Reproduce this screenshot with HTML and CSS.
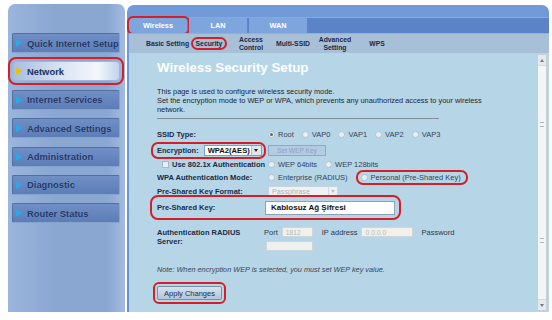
FILE: index.html
```html
<!DOCTYPE html>
<html lang="en">
<head>
    <meta charset="UTF-8">
    <meta name="viewport" content="width=device-width, initial-scale=1.0">
    <title>Wireless Security Setup</title>
    <link rel="stylesheet" href="styles.css">
</head>
<body>
    <div class="frame">
        <div class="sidebar">
            <a class="menu">Quick Internet Setup</a>
            <a class="menu active mark">Network</a>
            <a class="menu">Internet Services</a>
            <a class="menu">Advanced Settings</a>
            <a class="menu">Administration</a>
            <a class="menu">Diagnostic</a>
            <a class="menu">Router Status</a>
        </div>

        <div class="main">
            <div class="tabs">
                <span class="tab mark">Wireless</span>
                <span class="tab">LAN</span>
                <span class="tab">WAN</span>
            </div>

            <div class="subtabs">
                <span class="sub">Basic Setting</span>
                <span class="sub"><span class="mark sec">Security</span></span>
                <span class="sub">Access<br>Control</span>
                <span class="sub">Multi-SSID</span>
                <span class="sub">Advanced<br>Setting</span>
                <span class="sub">WPS</span>
            </div>

            <div class="content">
                <div class="page">
                    <h1>Wireless Security Setup</h1>
                    <p class="intro">This page is used to configure wireless security mode.<br>Set the encryption mode to WEP or WPA, which prevents any unauthorized access to your wireless<br>network.</p>
                    <hr>

                    <div class="row r-ssid">
                        <div class="label">SSID Type:</div>
                        <div class="ctrl">
                            <span class="opt"><i class="radio on"></i>Root</span>
                            <span class="opt"><i class="radio"></i>VAP0</span>
                            <span class="opt"><i class="radio"></i>VAP1</span>
                            <span class="opt"><i class="radio"></i>VAP2</span>
                            <span class="opt"><i class="radio"></i>VAP3</span>
                        </div>
                    </div>

                    <div class="row r-enc">
                        <div class="label">
                            <span class="mark enc">Encryption:
                                <span class="select"><b>WPA2(AES)</b><span class="arrow"></span></span>
                            </span>
                        </div>
                        <div class="ctrl">
                            <span class="btn-off">Set WEP Key</span>
                        </div>
                    </div>

                    <div class="row r-small">
                        <div class="label indent"><i class="check"></i>Use 802.1x Authentication</div>
                        <div class="ctrl">
                            <span class="opt"><i class="radio"></i>WEP 64bits</span>
                            <span class="opt"><i class="radio"></i>WEP 128bits</span>
                        </div>
                    </div>

                    <div class="row r-small">
                        <div class="label">WPA Authentication Mode:</div>
                        <div class="ctrl">
                            <span class="opt"><i class="radio"></i>Enterprise (RADIUS)</span>
                            <span class="opt mark pers"><i class="radio"></i>Personal (Pre-Shared Key)</span>
                        </div>
                    </div>

                    <div class="row r-fmt">
                        <div class="label">Pre-Shared Key Format:</div>
                        <div class="ctrl">
                            <span class="select off">Passphrase<span class="arrow"></span></span>
                        </div>
                    </div>

                    <div class="row r-psk mark">
                        <div class="label">Pre-Shared Key:</div>
                        <div class="ctrl">
                            <span class="input key">Kablosuz Ağ Şifresi</span>
                        </div>
                    </div>

                    <div class="row r-radius">
                        <div class="label">Authentication RADIUS<br>Server:</div>
                        <div class="ctrl wrap">
                            <span>Port</span>
                            <span class="input dim w-port">1812</span>
                            <span class="ip">IP address</span>
                            <span class="input dim w-ip">0.0.0.0</span>
                            <span class="pw">Password</span>
                            <span class="input dim w-pw"></span>
                        </div>
                    </div>

                    <p class="note">Note: When encryption WEP is selected, you must set WEP key value.</p>

                    <div class="actions">
                        <span class="btn mark">Apply Changes</span>
                    </div>
                </div>

                <div class="scrollbar">
                    <span class="sb-btn up"></span>
                    <span class="sb-thumb"><i></i><i></i></span>
                    <span class="sb-btn down"></span>
                </div>
            </div>
        </div>
    </div>
</body>
</html>
```

FILE: styles.css
```css
body {
    margin: 0;
    background: #fff;
    font-family: "Liberation Sans", Arial, sans-serif;
    color: #1c2330;
}
.frame {
    display: flex;
    gap: 2px;
    height: 308px;
    padding: 4px 3px 0 8px;
}

/* left menu */
.sidebar {
    width: 117px;
    flex: none;
    box-sizing: border-box;
    padding: 29px 5px 0 4px;
    display: flex;
    flex-direction: column;
    gap: 8.4px;
    background: linear-gradient(90deg, #9bb5dc, #8aa7d2 40%, #8aa7d2 85%, #a3bbe0);
    border-radius: 7px 7px 0 0;
}
.menu {
    height: 20px;
    box-sizing: border-box;
    display: flex;
    align-items: center;
    gap: 5px;
    padding-left: 3px;
    font-size: 9.4px;
    font-weight: bold;
    color: #1e3566;
    text-shadow: 0 0 1px rgba(160, 190, 230, 0.6);
    white-space: nowrap;
    background: linear-gradient(#6f8fc5, #5c7db6);
    border: 1px solid;
    border-color: #50709f #86a3cf #86a3cf #50709f;
    border-radius: 2px;
}
.menu::before {
    content: "";
    border-left: 6px solid #2aa9e8;
    border-top: 4px solid transparent;
    border-bottom: 4px solid transparent;
}
.menu.active {
    background: linear-gradient(90deg, #a6bddf, #d9e4f2 45%, #f4f7fb 80%, #c3d3ea);
    border-color: #9fb6d8;
    border-radius: 4px;
}
.menu.active::before {
    border-left-color: #e8c400;
}

/* red annotation rings */
.mark {
    outline: 2.5px solid #d51f26;
    outline-offset: 2px;
    border-radius: 5px;
}

/* main panel */
.main {
    flex: 1;
    display: flex;
    flex-direction: column;
    margin-top: 1px;
    padding: 12px 0 0 2px;
    background: linear-gradient(#739ad8, #6890d1);
    border-radius: 7px 7px 0 0;
}
.tabs {
    height: 16px;
    display: flex;
    gap: 1px;
    background: #5b84c8;
    border-top: 1px solid #86aae0;
    box-sizing: border-box;
}
.tab {
    width: 58px;
    display: flex;
    align-items: center;
    justify-content: center;
    font-size: 7.3px;
    font-weight: bold;
    color: #fff;
    background: #7ea5dd;
    border-right: 1px solid #5e86c6;
}
.tab.mark {
    outline-offset: -0.5px;
    border-radius: 4px;
}
.subtabs {
    height: 19px;
    display: flex;
    align-items: center;
    padding-left: 17px;
    background: #a8bfd8;
    border-top: 1px solid #8fb0dc;
}
.sub {
    width: 42px;
    flex: none;
    text-align: center;
    font-size: 6.8px;
    font-weight: bold;
    line-height: 7.5px;
    color: #1b2946;
    white-space: nowrap;
}
.sub .sec {
    padding: 1px 3px;
    outline-offset: 0;
}

/* content */
.content {
    flex: 1;
    display: flex;
    background: #b6d6e7;
}
.page {
    flex: 1;
    padding-left: 28px;
    font-size: 7.5px;
}
h1 {
    margin: 5px 0 0;
    font-size: 13.3px;
    line-height: 20px;
    color: #fff;
}
.intro {
    margin: 8.5px 0 0;
    font-size: 7.4px;
    line-height: 9px;
    white-space: nowrap;
}
hr {
    margin: 4.5px 0 0;
    width: 282px;
    border: 0;
    border-top: 1px solid #7f8e9b;
}
.row {
    display: flex;
    align-items: center;
}
.label {
    width: 111px;
    flex: none;
    display: flex;
    align-items: center;
    font-weight: bold;
    color: #1b2a44;
    white-space: nowrap;
}
.label.indent {
    padding-left: 5px;
    box-sizing: border-box;
}
.ctrl {
    display: flex;
    align-items: center;
    color: #34425a;
}
.r-ssid {
    height: 16px;
    margin-top: 7px;
}
.r-enc {
    height: 16px;
}
.r-small {
    height: 13px;
}
.r-fmt {
    height: 14px;
}
.opt {
    display: inline-flex;
    align-items: center;
    margin-right: 8px;
    white-space: nowrap;
}
.radio {
    width: 5px;
    height: 5px;
    margin-right: 3px;
    border-radius: 50%;
    border: 1px solid #b2c1cf;
    background: #e9f0f5;
    display: inline-flex;
    align-items: center;
    justify-content: center;
}
.radio.on::after {
    content: "";
    width: 3px;
    height: 3px;
    border-radius: 50%;
    background: #5a6675;
}
.check {
    width: 5px;
    height: 5px;
    margin-right: 3px;
    border: 1px solid #a9b7c4;
    background: #e8eef3;
}
.enc {
    display: inline-flex;
    align-items: center;
    margin-left: -4px;
    padding: 1px 2px 1px 4px;
    outline-offset: 0;
}
.select {
    display: inline-flex;
    align-items: center;
    justify-content: space-between;
    width: 58px;
    height: 11px;
    margin-left: 5px;
    padding-left: 3px;
    box-sizing: border-box;
    background: #fff;
    border: 1px solid #7f9db9;
    color: #111;
    font-size: 7.6px;
}
.arrow {
    width: 9px;
    height: 100%;
    display: flex;
    align-items: center;
    justify-content: center;
    background: #e2e7ee;
    border-left: 1px solid #b3bfcc;
}
.arrow::after {
    content: "";
    border-top: 3px solid #222;
    border-left: 2.5px solid transparent;
    border-right: 2.5px solid transparent;
}
.select.off {
    width: 70px;
    height: 10px;
    margin-left: 0;
    background: #eef2f5;
    border-color: #c9d3dc;
    color: #a9b3bd;
    font-size: 7.2px;
}
.select.off .arrow {
    width: 8px;
    background: #eef1f4;
    border-left-color: #d3dbe2;
}
.select.off .arrow::after {
    border-top-color: #b9c2cb;
}
.btn-off {
    width: 56px;
    height: 9px;
    display: flex;
    align-items: center;
    justify-content: center;
    background: #b3cce3;
    border: 1px solid #8fa9c4;
    color: #8ba3bd;
    font-size: 6.6px;
}
.pers {
    margin-left: 2px;
    padding: 1px 5px 1px 3px;
    outline-offset: 0;
}
.r-psk {
    display: inline-flex;
    height: 21px;
    margin: -1px 0 0 -5px;
    padding: 0 4px 0 5px;
    outline-offset: 0;
    border-radius: 6px;
}
.r-psk .label {
    width: 108px;
}
.input {
    display: inline-flex;
    align-items: center;
    box-sizing: border-box;
    height: 10px;
    padding-left: 3px;
    border: 1px solid #cdd5dc;
    background: #f3f0ea;
    color: #b4b9be;
    font-size: 6.8px;
}
.input.key {
    width: 130px;
    height: 14px;
    padding-left: 5px;
    background: #fff;
    border-color: #8fa2b5;
    color: #111;
    font-size: 8px;
    font-weight: bold;
}
.r-radius {
    align-items: flex-start;
    margin-top: 7px;
}
.r-radius .label {
    width: 107px;
    padding-top: 3px;
    line-height: 9px;
}
.wrap {
    width: 200px;
    flex-wrap: wrap;
    row-gap: 4px;
    padding-top: 2px;
    color: #2c3848;
}
.w-port {
    width: 31px;
    margin-left: 4px;
}
.ip {
    margin-left: 9px;
}
.w-ip {
    width: 52px;
    margin-left: 4px;
}
.pw {
    margin-left: 8px;
}
.w-pw {
    width: 47px;
    margin-left: 2px;
    background: #eef0ef;
}
.note {
    margin: 14px 0 0;
    font-size: 7.3px;
    line-height: 10px;
    font-style: italic;
    color: #3a4552;
}
.actions {
    margin-top: 11px;
    display: flex;
}
.btn {
    width: 65px;
    height: 14px;
    display: flex;
    align-items: center;
    justify-content: center;
    box-sizing: border-box;
    background: linear-gradient(#d6e2ee, #b1c6da);
    border: 1px solid #7890a8;
    border-radius: 2px;
    color: #1d2d45;
    outline-offset: 2px;
}

/* scrollbar */
.scrollbar {
    width: 10px;
    flex: none;
    margin: 1px 2px 1px 0;
    display: flex;
    flex-direction: column;
    box-sizing: border-box;
    background: #eef0f2;
    border: 1px solid #c6ced6;
}
.sb-btn {
    height: 10px;
    display: flex;
    align-items: center;
    justify-content: center;
    background: #e6eaee;
}
.sb-btn.up::after {
    content: "";
    border-bottom: 3px solid #6d7a88;
    border-left: 2.5px solid transparent;
    border-right: 2.5px solid transparent;
}
.sb-btn.down::after {
    content: "";
    border-top: 3px solid #6d7a88;
    border-left: 2.5px solid transparent;
    border-right: 2.5px solid transparent;
}
.sb-thumb {
    flex: 1;
    display: flex;
    flex-direction: column;
    justify-content: space-around;
    align-items: center;
    background: #f4f5f6;
    border-top: 1px solid #d3d9df;
    border-bottom: 1px solid #d3d9df;
}
.sb-thumb i {
    width: 4px;
    height: 3px;
    border-top: 1px solid #aeb6bf;
    border-bottom: 1px solid #aeb6bf;
}
```
